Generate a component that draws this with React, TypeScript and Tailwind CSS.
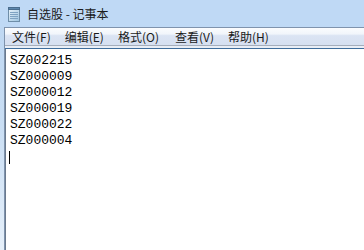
import React from "react";

const menus = ["文件(F)", "编辑(E)", "格式(O)", "查看(V)", "帮助(H)"];
const lines = ["SZ002215", "SZ000009", "SZ000012", "SZ000019", "SZ000022", "SZ000004"];

function NotepadIcon() {
  return (
    <svg width="14" height="16" viewBox="0 0 14 16">
      <defs>
        <linearGradient id="pg" x1="0" y1="0" x2="1" y2="1">
          <stop offset="0" stopColor="#eaf4fb" />
          <stop offset="1" stopColor="#9cc3df" />
        </linearGradient>
      </defs>
      <rect x="1.5" y="2.5" width="11" height="13" fill="url(#pg)" stroke="#6f8ea8" />
      <rect x="1.5" y="1.5" width="11" height="2" fill="#5d87ad" stroke="#4a6d8e" />
      <line x1="3" y1="6.5" x2="11" y2="6.5" stroke="#7fa3c2" />
      <line x1="3" y1="8.5" x2="11" y2="8.5" stroke="#7fa3c2" />
      <line x1="3" y1="10.5" x2="11" y2="10.5" stroke="#7fa3c2" />
      <line x1="3" y1="12.5" x2="11" y2="12.5" stroke="#7fa3c2" />
    </svg>
  );
}

export default function App() {
  return (
    <div
      className="w-[364px] h-[250px] flex flex-col overflow-hidden bg-[linear-gradient(180deg,#bcd6f2_0%,#c9def4_50%,#e6f0fa_100%)]"
      style={{ fontFamily: '"Noto Sans CJK SC", "Noto Sans", sans-serif' }}
    >
      <div className="h-[27px] shrink-0 flex items-center pl-[7px] bg-[#bfd9f5]">
        <NotepadIcon />
        <span className="ml-[6px] text-[12px] leading-none text-[#1b1b1b]">自选股 - 记事本</span>
      </div>
      <div className="flex-1 flex pl-[4px] min-h-0">
        <div className="flex-1 flex flex-col border-l border-t border-[#7f93ad] min-h-0">
          <div className="h-[18px] shrink-0 flex items-center bg-[linear-gradient(180deg,#fbfcfe_0%,#f1f5fb_35%,#dbe4f3_45%,#d6e0f1_100%)] border-b border-[#a5aebc]">
            {menus.map((m, i) => (
              <span
                key={m}
                className={
                  "text-[12px] leading-none text-[#1a1a1a] px-[7px] " +
                  (i === 2 ? "mr-[2px]" : "mr-[0px]")
                }
              >
                {m}
              </span>
            ))}
          </div>
          <div className="h-[2px] shrink-0 bg-[#e9eef6]" />
          <div className="h-[1px] shrink-0 bg-[#3f6d9c]" />
          <div className="flex-1 bg-white border-l border-[#6a7a8e] pl-[4px] pt-[4px]">
            <div
              className="text-[13px] leading-[16px] text-black"
              style={{ fontFamily: '"Liberation Mono", monospace' }}
            >
              {lines.map((l) => (
                <div key={l}>{l}</div>
              ))}
              <div className="h-[16px] flex items-center">
                <div className="w-[1px] h-[13px] bg-black ml-[-1px]" />
              </div>
            </div>
          </div>
        </div>
      </div>
    </div>
  );
}
